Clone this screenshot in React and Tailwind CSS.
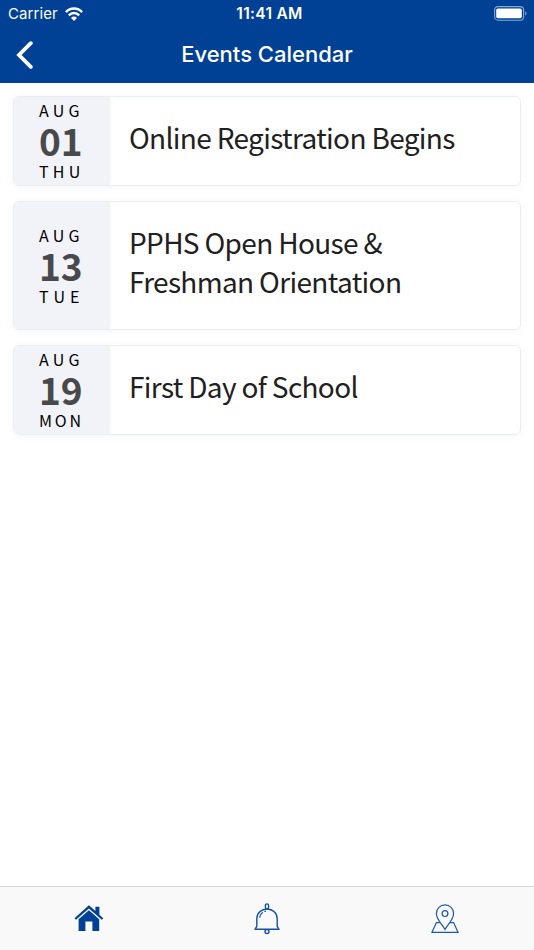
import React from 'react';

const events = [
  { id: 1, month: 'AUG', day: '01', weekday: 'THU', title: ['Online Registration Begins'] },
  { id: 2, month: 'AUG', day: '13', weekday: 'TUE', title: ['PPHS Open House &', 'Freshman Orientation'] },
  { id: 3, month: 'AUG', day: '19', weekday: 'MON', title: ['First Day of School'] },
];

// Letter spacing per label so they all end up equally wide
const tracking = {
  AUG: 'tracking-[4.2px]',
  THU: 'tracking-[4.2px]',
  TUE: 'tracking-[4.9px]',
  MON: 'tracking-[2.8px]',
};

const WifiIcon = () => (
  <svg className="w-[18px] h-[14px] -mt-px" viewBox="0 0 18 13" preserveAspectRatio="none" fill="none" stroke="white" strokeWidth="2.3">
    <path d="M0.9 4.7 A11.4 11.4 0 0 1 17.1 4.7" />
    <path d="M3.8 7.8 A7.3 7.3 0 0 1 14.2 7.8" />
    <path d="M9 13 L6 10.1 A4.3 4.3 0 0 1 12 10.1 Z" fill="white" stroke="none" />
  </svg>
);

const BatteryIcon = () => (
  <svg className="w-[34px] h-[15px] -mt-px" viewBox="0 0 34 15" fill="none">
    <rect x="0.6" y="0.6" width="29" height="13.6" rx="3.4" stroke="white" strokeOpacity="0.55" strokeWidth="1.1" />
    <rect x="2.2" y="2.6" width="25.6" height="9.6" rx="1.6" fill="white" />
    <path d="M31.2 5.2 C33 6 33 8.8 31.2 9.6 Z" fill="white" fillOpacity="0.55" />
  </svg>
);

const HomeIcon = () => (
  <svg className="w-[30px] h-[28px] mb-0.5" viewBox="0 0 30 28" fill="#004195">
    <path d="M14.9 1.2 L0.5 14.2 L2 15.8 L14.9 4.6 L27.8 15.8 L29.3 14.2 L25.4 10.7 V2.8 H21.4 V7.1 Z" />
    <path d="M14.9 6.2 L4.6 15.2 V27 H11.4 V17.6 H18.4 V27 H25.2 V15.2 Z" />
  </svg>
);

const BellIcon = () => (
  <svg className="w-[26px] h-[32px]" viewBox="0 0 26 32" fill="none" stroke="#1450a5" strokeWidth="1.4">
    <rect x="11.4" y="0.9" width="3.2" height="5" rx="1.6" />
    <path d="M2.8 23.4 V15.8 C2.8 10 7.2 6 13 6 C18.8 6 23.2 10 23.2 15.8 V23.4 L25 26.3 H1 Z" strokeLinejoin="round" />
    <circle cx="13" cy="28.6" r="2" />
    <path d="M5.6 14.6 C5.9 12.2 7 10.4 8.8 9.2 M10.4 8.5 L12 8.1" strokeWidth="1.2" />
  </svg>
);

const MapIcon = () => (
  <svg className="w-[28px] h-[30px]" viewBox="0 0 28 30" fill="none" stroke="#1d59a9" strokeWidth="1.2">
    <path d="M14 25.4 C11.5 20.8 5.4 15.4 5.4 9.4 A8.6 8.6 0 0 1 22.6 9.4 C22.6 15.4 16.5 20.8 14 25.4 Z" />
    <circle cx="14" cy="9.6" r="2.9" />
    <path d="M8.8 18.6 H5.4 L0.9 28.4 H27.1 L22.6 18.6 H19.2" />
  </svg>
);

const EventCard = ({ event }) => (
  <div className="flex rounded-md border border-[#e9eff1] bg-white overflow-hidden shadow-[0_1px_8px_rgba(0,0,0,0.04)]">
    <div className="w-24 shrink-0 flex flex-col justify-center pl-[25px] bg-[#f2f3f8] text-black shadow-[0_0_6px_rgba(0,0,0,0.04)]">
      <span className={`h-[27px] leading-[27px] text-[16px] ${tracking[event.month]}`}>{event.month}</span>
      <span className="h-[32px] leading-[32px] text-[37px] font-bold text-[#48494b]">{event.day}</span>
      <span className={`h-[29px] leading-[31px] text-[16px] ${tracking[event.weekday]}`}>{event.weekday}</span>
    </div>
    <div className="pl-[19px] pt-[21px] pb-[28px] text-[28px] leading-[39px] tracking-[-0.66px] text-[#1f2021] whitespace-nowrap">
      {event.title.map((line) => (
        <div key={line}>{line}</div>
      ))}
    </div>
  </div>
);

const App = () => {
  return (
    <div className="w-full h-[950px] flex flex-col bg-white font-['Noto_Sans_CJK_SC',sans-serif]">
      <header className="h-[83px] shrink-0 bg-[#004195] text-white font-[Inter,sans-serif]">
        <div className="h-7 grid grid-cols-3 items-center pl-2 pr-1.5">
          <div className="flex items-center gap-[7px]">
            <span className="text-[15px] leading-7 tracking-[0.1px]">Carrier</span>
            <WifiIcon />
          </div>
          <span className="pl-[3px] text-center text-[15.5px] leading-7 font-semibold tracking-[0.3px]">11:41 AM</span>
          <div className="flex justify-end">
            <BatteryIcon />
          </div>
        </div>
        <div className="h-[54px] grid grid-cols-[60px_1fr_60px] items-center">
          <button className="pl-4" aria-label="Back">
            <svg className="w-[18px] h-[28px]" viewBox="0 0 18 28" fill="none" stroke="white" strokeWidth="3.8" strokeLinecap="round" strokeLinejoin="miter">
              <path d="M14.8 2.2 L3 14 L14.8 25.8" />
            </svg>
          </button>
          <h1 className="pb-0.5 text-center text-[22px] font-medium">Events Calendar</h1>
        </div>
      </header>

      <main className="flex-1 flex flex-col gap-[15px] px-[13px] pt-[13px]">
        {events.map((event) => (
          <EventCard key={event.id} event={event} />
        ))}
      </main>

      <nav className="h-[64px] shrink-0 grid grid-cols-3 items-center justify-items-center bg-[#f9f9f9] border-t border-[#d5d5d6]">
        <HomeIcon />
        <BellIcon />
        <MapIcon />
      </nav>
    </div>
  );
};

export default App;
